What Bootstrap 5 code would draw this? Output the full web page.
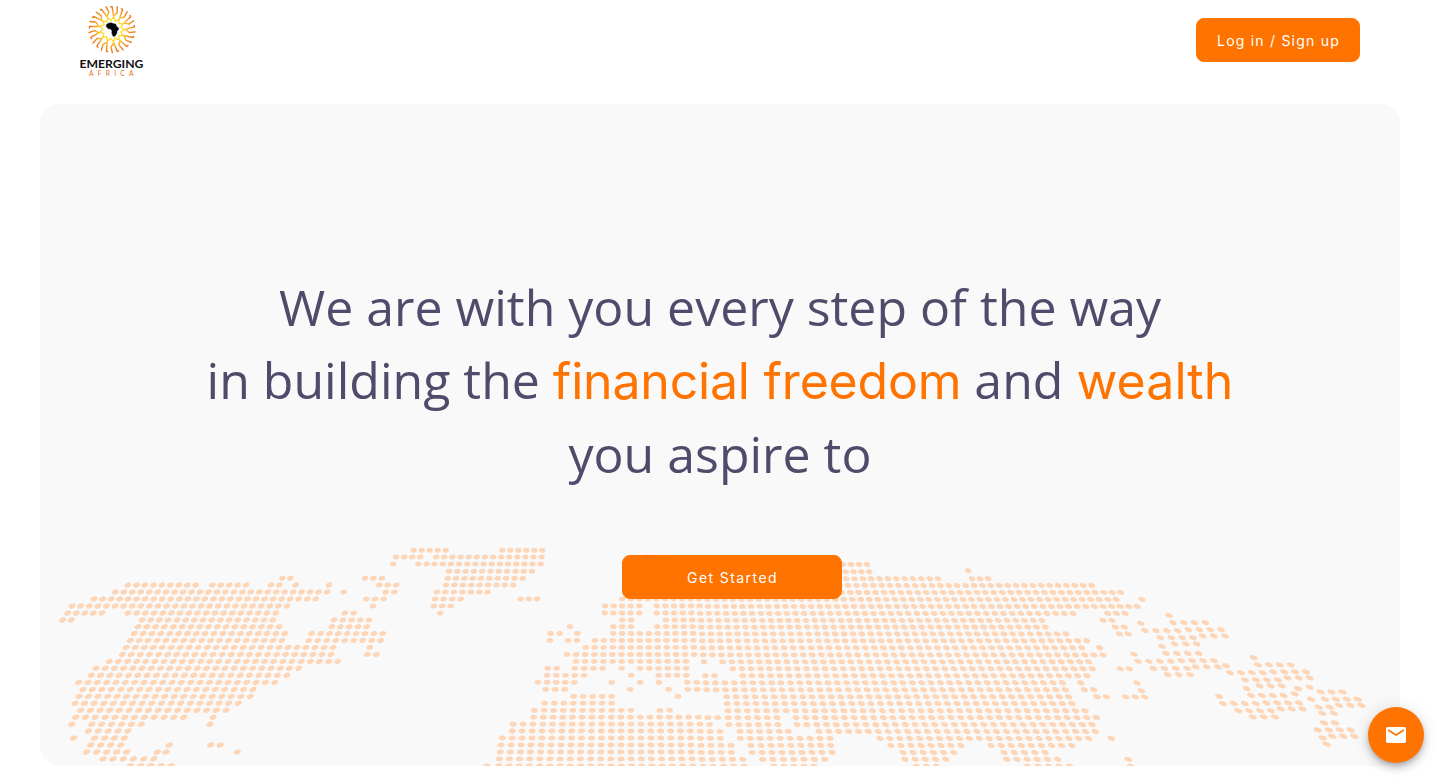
<!DOCTYPE html>
<html lang="en">
<head>
<meta charset="utf-8">
<meta name="viewport" content="width=device-width, initial-scale=1">
<title>Emerging Africa</title>
<link href="https://cdn.jsdelivr.net/npm/bootstrap@5.3.0/dist/css/bootstrap.min.css" rel="stylesheet">
<style>
  body { font-family: Inter, sans-serif; background: #fff; overflow: hidden; }
  .topbar { height: 80px; padding: 0 80px; }
  .btn-brand {
    --bs-btn-bg: #ff7300; --bs-btn-color: #fff; --bs-btn-border-color: #ff7300;
    --bs-btn-hover-bg: #e86900; --bs-btn-hover-color: #fff;
    height: 44px; border-radius: 8px; font-size: 14px; padding: 0;
    display: inline-flex; align-items: center; justify-content: center;
  }
  .btn-login { width: 164px; letter-spacing: 1.22px; padding-left: 1px; }
  .btn-start { width: 220px; margin-left: 24px; letter-spacing: 1.42px; padding: 1px 0 0 1px; }
  .hero { margin: 24px 40px 0; height: 662px; border-radius: 20px; background: #f9f9f9; padding-top: 166.7px; }
  .headline { font-family: "Open Sans", sans-serif; font-size: 50px; line-height: 73.5px; color: #504b6b; font-weight: 400; margin-bottom: 64px; white-space: nowrap; }
  .headline span { font-family: Inter, sans-serif; color: #ff7300; line-height: 1; letter-spacing: -.2px; }
  .headline span + span { letter-spacing: .1px; }
  .dotmap { left: 0; top: 0; fill: #fdd5b7; }
  .fab { right: 16px; bottom: 16px; width: 56px; height: 56px; background: #ff7300; box-shadow: 0 3px 5px -1px rgba(0,0,0,.2), 0 6px 10px rgba(0,0,0,.14), 0 1px 18px rgba(0,0,0,.12); }
</style>
</head>
<body>
<nav class="topbar d-flex align-items-center justify-content-between">
  <a href="#" aria-label="Emerging Africa">
    <svg class="d-block" width="64" height="80" viewBox="0 0 64 80">
      <defs>
        <radialGradient id="sun" gradientUnits="userSpaceOnUse" cx="0" cy="0" r="24">
          <stop offset=".4" stop-color="#ffe640"/><stop offset=".62" stop-color="#fbb62c"/><stop offset=".9" stop-color="#ea7a1c"/>
        </radialGradient>
        <path id="ray" d="M-2.3-8.8L0-12.2L2.3-8.8M0-12.2L-3-22.4L-4.4-22.2M-.4-13.6L2.8-17.2L2-23.2" fill="none" stroke="url(#sun)" stroke-width="1.4" stroke-linecap="round" stroke-linejoin="round"/>
      </defs>
      <g id="rays" transform="translate(32 29.4)"></g>
      <path d="M28.3 23.2l3.4-.5 1.2.9 2.7.4 1.2 2.8 2 1.3-.5 1.6-1.5 1.7.2 1.7-1.3 2.2-1.6 1.3-1-.3-1.3-3.1.2-2.1-1.2-2.1-2.6-.2-2-2.3.3-1.9z" fill="#050505" stroke="#050505" stroke-width=".4"/>
      <text x="-.6" y="67.8" font-family="Lato, sans-serif" font-weight="700" font-size="12" textLength="64" lengthAdjust="spacingAndGlyphs" fill="#111">EMERGING</text>
      <text x="9" y="75.8" font-family="Lato, sans-serif" font-size="6.8" textLength="44.5" fill="#ea6f25">AFRICA</text>
    </svg>
  </a>
  <button class="btn btn-brand btn-login">Log in / Sign up</button>
</nav>

<main class="hero position-relative overflow-hidden text-center">
  <svg id="map" class="dotmap position-absolute" width="1360" height="662" viewBox="40 104 1360 662" aria-hidden="true"></svg>
  <div class="position-relative">
    <h1 class="headline">We are with you every step of the way<br>in building the <span>financial freedom</span> and <span>wealth</span><br>you aspire to</h1>
    <button class="btn btn-brand btn-start">Get Started</button>
  </div>
</main>

<button class="fab btn rounded-circle position-fixed p-0 border-0 d-flex align-items-center justify-content-center" aria-label="Contact">
  <svg width="24" height="24" viewBox="0 0 24 24" fill="#fff"><path d="M20 4H4c-1.1 0-1.99.9-1.99 2L2 18c0 1.1.9 2 2 2h16c1.1 0 2-.9 2-2V6c0-1.1-.9-2-2-2zm0 4l-8 5-8-5V6l8 5 8-5v2z"/></svg>
</button>

<script src="https://cdn.jsdelivr.net/npm/bootstrap@5.3.0/dist/js/bootstrap.bundle.min.js"></script>
<script>
  // Sun rays of the logo
  document.getElementById('rays').innerHTML =
    Array.from({length: 13}, (_, i) => `<use href="#ray" transform="rotate(${(i * 360 / 13 + 8).toFixed(2)})"/>`).join('');

  // World map: one line per latitude, "y: first-last*count" runs or single positions
  const land = `
550.3: 413.7-445.7*5 502.3-542.3*6
557: 396-420.3*4 436.3-541.7*14 646.7-655*2
564: 393.3 418.3-540.7*16 843-867*4
571.3: 449-532*11 845.7-869.3*4
570.3: 968.3
578.3: 282.3-290.3*2 365-382*3 447.7-522.7*10 846.3-938*12 972-988.3*3
585: 128-195.7*9 212.3-246*5 271-279.3*2 295.7 329 379.3-396.3*3 446-513.3*9 839.6-1091.7*31
592: 115.3-327*26 343.7 385.7-394.3*2 437-487.7*7 841.7-1120.7*34
599: 94-315.7*27 366.3-383.7*3 435-460.7*4 520.7-537*3 622.3-1116.3*59 1142
606: 72-287*26 373 433.7-450.7*3 605-639.3*5 656.7-1137.3*57
613: 67.7-102*5 128-275.7*18 344.7-353.7*2 440.3 604.7-639.3*5 656.7-1073*49 1107.7-1125*3
620: 62.7-71.3*2 142-272.7*16 334-369*5 622.3-631*2 666-1042*44 1103-1112*2
614.8: 1169
622.2: 1173-1205.3*4
622.8: 1140.7
626.7: 138-279*17 331.7-366.7*5 570 613.3-631*3 657.3-1045.3*45 1115.3-1124.3*2
633.5: 134.3-284.7*18 311.7-382.7*9 550.7-559.7*2 577.3 613.3-1066*52 1119.3-1128.3*2
640.4: 130.3-282*18 308.7-380.7*9 550 568-577*2 595-1086.7*56
647.4: 126.3-333*24 369.7 585.7-1081.7*56 1099.7
654.5: 122.3-331*24 367.3-376.3*2 567-1103*60
661.4: 109.3-337.7*26 576-686*13 704 722.7-1088.7*41
668.3: 96-298.7*23 547.7-556.7*2 575-602.7*4 621.7 640-686.3*6 732.7-1092.3*40 1120.3-1129.3*2
675.3: 91.3-286.7*22 547-584*5 631 658.7-686.3*4 705.3-714.7*2 742.7-1087*38
682.4: 78.7-274.7*22 538-574.3*5 611.7 640.3 659 687.3-1062.3*41 1080.7
689.4: 83-253*19 545.7-564.7*3 630 668.7 687.7-1065.3*41 1084.3-1093.7*2
696.4: 79-250.3*19 573.7-611.7*5 678 726.7-1068.7*37 1097-1106.3*2 1125.7-1144.7*3
703.2: 75-238.3*18 544.7-611.7*8 727.3-1072*37
710.3: 80.7-226*16 534.3-631*11 660-669.7*2 728-1085*38
717.2: 75.7-183.7*12 213 533.7-717.7*20 728.3-777*6 796-1096.3*32
724.2: 71.7 91.7-141.3*6 210 513.3-709.7*21 729-778*6 797-1092*31
731: 88.3-128*5 512.3-720*22 740-769.3*4 779.3-788.3*2 819-1095.3*29
738: 73.7 94.7-124.3*4 502.3-720.3*23 740.3-830*10 880-1088.7*22 1111.3
745: 90.7-120.7*4 169.3 210.7-220.3*2 501-731*24 751-830.7*9 891-961*8 991-1071.7*9
752: 86.7-126.7*5 157.3-166*2 237.3 500.3-731.3*24 752-832*9 903-953.7*6 1004-1045*5
758.9: 103-153.7*6 499.3-742.7*25 762.7-824.7*7 905-945.7*5 1006.7-1057.7*6 1128.3
765.8: 130-171*5 486.7 498.7-744*25 774-814*5 916.7-936.7*3 1028-1070*5 1131
630.2: 1145-1177.7*4
629.2: 1188.3-1221*4
637.2: 1160.3-1193*4
635.5: 1202.7-1225*3
645.8: 1162
643.5: 1174.7-1196.7*3
653: 1166-1198.7*4
653.8: 1134
660.8: 1138-1170.7*4
660.2: 1181.3-1214*4
668: 1153.3-1187*4
666.5: 1195.7-1218*3
665.2: 1226
674.2: 1167.7-1190*3
682.5: 1137
690.2: 1141.3
657.2: 1253.7
664.5: 1258-1290.7*4
672.3: 1230-1262.7*4
671.5: 1273.3-1306*4
679.5: 1245-1278*4
677.5: 1287.7-1309.7*3
688.2: 1246.7 1298
685.5: 1259.7-1281.7*3
686.8: 1309.7
695.1: 1251-1283.7*4
693.5: 1294.7
696: 1219
703.1: 1223-1255.7*4
702.5: 1266.3-1299*4
710.3: 1238.3-1271*4
708.5: 1280.7-1302.7*3
716.5: 1252.7-1275*3
691.5: 1320.7-1342.3*3
698.8: 1311 1325-1357.7*4
706.8: 1318.7-1329.7*2
704.9: 1339-1361.3*3
712.8: 1322.3-1333.7*2
722.5: 1324-1335*2
729.5: 1317.7-1350.7*4
737.5: 1322.7
735.8: 1332.3-1354.3*3
743.8: 1326.7`;
  let dots = '';
  for (const line of land.trim().split('\n')) {
    const [lat, runs] = line.split(': ');
    for (const run of runs.split(' ')) {
      const [span, n = 1] = run.split('*');
      const [a, b = a] = span.split('-').map(Number);
      for (let i = 0; i < n; i++) {
        const x = n > 1 ? a + (b - a) * i / (n - 1) : a;
        const y = +lat + (x > 700 ? .4 : 0);
        const d = (x - 620) / 600;
        const tilt = Math.max(-23, Math.min(20, d * 42));
        const rx = 3.05 + Math.min(Math.abs(d), .9) * .4 + Math.max(0, d - .7) * 1.1 + (y - 550) / 210 * .4;
        dots += `<ellipse rx="${rx.toFixed(2)}" ry="${d > .8 ? 2.2 : 2.4}" transform="translate(${x.toFixed(1)} ${y.toFixed(1)}) rotate(${tilt.toFixed(1)})"/>`;
      }
    }
  }
  document.getElementById('map').innerHTML = dots;
</script>
</body>
</html>
